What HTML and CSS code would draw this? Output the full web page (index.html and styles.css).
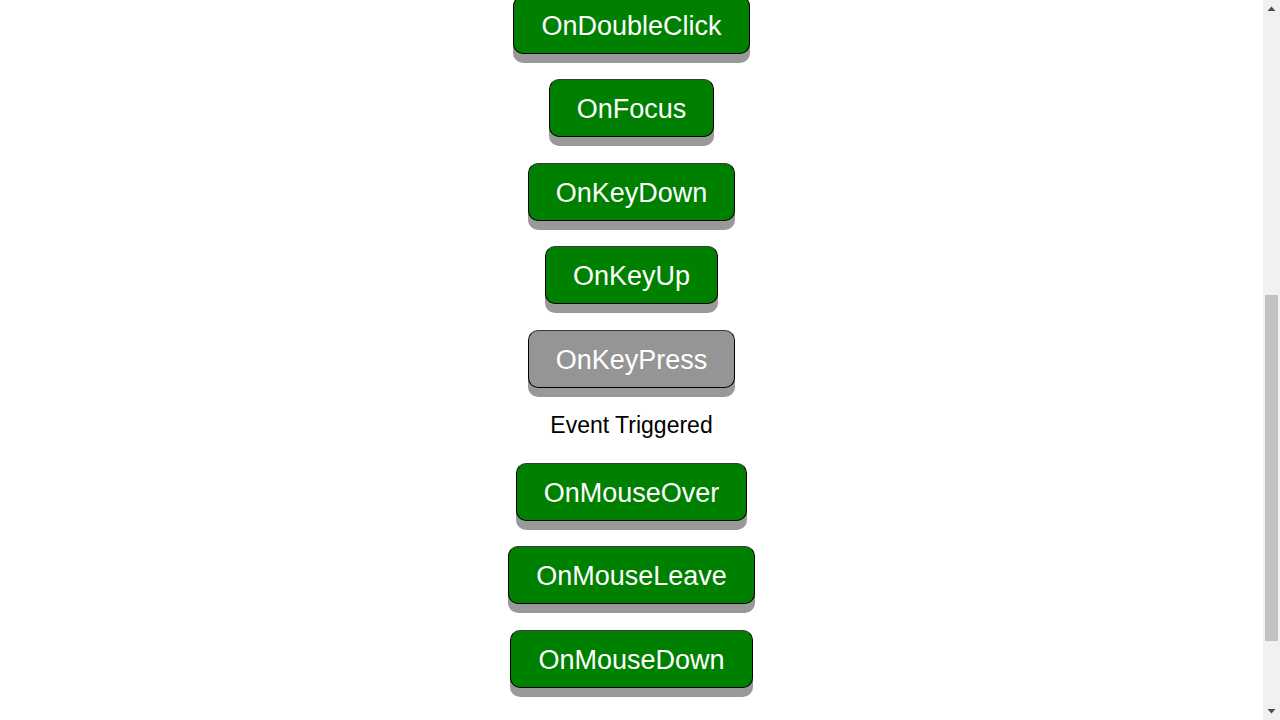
FILE: index.html
```html
<!DOCTYPE html>
<html lang="en">
<head>
<meta charset="utf-8">
<title>Event Handling Demo</title>
<link rel="stylesheet" href="styles.css">
</head>
<body>
<div class="window">
  <div class="viewport" id="viewport">
    <main class="page">
      <h1 class="title">Event Handling</h1>
      <button class="btn">OnClick</button>
      <button class="btn">OnChange</button>
      <button class="btn">OnBlur</button>
      <button class="btn">OnContextMenu</button>
      <button class="btn">OnCopy</button>
      <button class="btn">OnPaste</button>
      <button class="btn">OnDoubleClick</button>
      <button class="btn">OnFocus</button>
      <button class="btn">OnKeyDown</button>
      <button class="btn">OnKeyUp</button>
      <button class="btn btn-active">OnKeyPress</button>
      <p class="status">Event Triggered</p>
      <button class="btn">OnMouseOver</button>
      <button class="btn">OnMouseLeave</button>
      <button class="btn">OnMouseDown</button>
    </main>
  </div>
  <div class="scrollbar" aria-hidden="true">
    <div class="sb-arrow">
      <svg width="17" height="17" viewBox="0 0 17 17"><path d="M4.5 11 L8.5 6.5 L12.5 11 Z" fill="#505050"/></svg>
    </div>
    <div class="sb-track">
      <div class="sb-thumb"></div>
    </div>
    <div class="sb-arrow">
      <svg width="17" height="17" viewBox="0 0 17 17"><path d="M4.5 6 L12.5 6 L8.5 10.5 Z" fill="#505050"/></svg>
    </div>
  </div>
</div>
<script src="script.js"></script>
</body>
</html>
```

FILE: styles.css
```css
html,
body {
  margin: 0;
  height: 100%;
  overflow: hidden;
}

body {
  background: #ffffff;
  font-family: "Liberation Sans", Arial, sans-serif;
}

.window {
  display: flex;
  height: 100vh;
}

.viewport {
  flex: 1;
  overflow-y: scroll;
  scrollbar-width: none;
}

.viewport::-webkit-scrollbar {
  display: none;
}

.page {
  display: flex;
  flex-direction: column;
  align-items: center;
  gap: 25.5px;
  padding: 16px 0 162px;
}

.title {
  margin: 0;
  font-size: 28px;
  line-height: 34px;
  font-weight: bold;
  color: #000;
}

.btn {
  font-family: "Liberation Sans", Arial, sans-serif;
  font-size: 27px;
  line-height: 32px;
  padding: 13px 27px 11px;
  color: #ffffff;
  background: #008000;
  border: 1px solid #000;
  border-top-color: #3a3a3a;
  border-bottom-width: 1.5px;
  border-radius: 10px;
  box-shadow: 0 9px #999999;
  cursor: pointer;
  outline: none;
}

.btn-active {
  background: #959595;
}

.status {
  margin: 0;
  font-size: 23px;
  line-height: 24px;
  color: #000;
}

.scrollbar {
  width: 17px;
  flex: none;
  display: flex;
  flex-direction: column;
  background: #f1f1f1;
}

.sb-arrow {
  height: 17px;
  flex: none;
}

.sb-arrow svg {
  display: block;
}

.sb-track {
  flex: 1;
  padding-top: 278px;
}

.sb-thumb {
  height: 345.5px;
  margin: 0 2px;
  background: #c1c1c1;
}
```

FILE: script.js
```js
document.getElementById("viewport").scrollTop = 581;
```
